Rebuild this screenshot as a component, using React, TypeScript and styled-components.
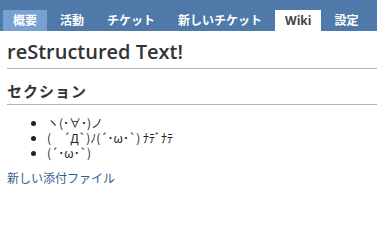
import * as React from 'react';
import styled, { createGlobalStyle } from 'styled-components';

const GlobalStyle = createGlobalStyle`
  body {
    margin: 0;
    background: #fff;
    font-family: "Noto Sans", "Noto Sans CJK JP", sans-serif;
    font-size: 12px;
    color: #000;
  }
`;

const MainNav = styled.nav`
  display: flex;
  gap: 3px;
  padding: 10px 0 0 3px;
  background: #4e79a8;
`;

const Tab = styled.a<{ $active?: boolean; $current?: boolean }>`
  display: block;
  height: 21px;
  line-height: 21px;
  padding: 0 10px;
  font-family: "Open Sans", "Noto Sans CJK JP", sans-serif;
  font-size: 12px;
  font-weight: bold;
  text-decoration: none;
  color: ${(p) => (p.$current ? '#444' : '#fff')};
  background: ${(p) => (p.$current ? '#fff' : p.$active ? '#76a1d0' : 'transparent')};
`;

const Content = styled.div`
  padding: 0 0 0 7px;
`;

const Title = styled.h1`
  margin: 8px 0 0;
  padding-bottom: 3px;
  border-bottom: 1px solid #b4b4b4;
  font-family: "Open Sans", "Noto Sans CJK JP", sans-serif;
  font-size: 20px;
  font-weight: 600;
  line-height: 26px;
  color: #333;
`;

const Section = styled.h2`
  margin: 12px 0 0;
  padding-bottom: 3px;
  border-bottom: 1px solid #b4b4b4;
  font-family: "Noto Sans CJK JP", sans-serif;
  font-size: 15px;
  font-weight: bold;
  line-height: 20px;
  letter-spacing: 1px;
  color: #333;
`;

const List = styled.ul`
  margin: 10px 0 0;
  padding-left: 40px;
  font-family: "Noto Sans CJK JP", sans-serif;
  font-size: 12px;
  line-height: 15px;
  color: #222;
`;

const AttachLink = styled.a`
  display: block;
  margin-top: 9px;
  font-family: "Noto Sans CJK JP", sans-serif;
  font-size: 12px;
  color: #2f5d8f;
  text-decoration: none;
`;

const tabs = ['概要', '活動', 'チケット', '新しいチケット', 'Wiki', '設定'];

export default function App() {
  return (
    <>
      <GlobalStyle />
      <MainNav>
        {tabs.map((t) => (
          <Tab key={t} href="#" $active={t === '概要'} $current={t === 'Wiki'}>
            {t}
          </Tab>
        ))}
      </MainNav>
      <Content>
        <Title>reStructured Text!</Title>
        <Section>セクション</Section>
        <List>
          <li>ヽ(･∀･)ノ</li>
          <li>(　´Д`)ﾉ(´･ω･`) ﾅﾃﾞﾅﾃ</li>
          <li>(´･ω･`)</li>
        </List>
        <AttachLink href="#">新しい添付ファイル</AttachLink>
      </Content>
    </>
  );
}
